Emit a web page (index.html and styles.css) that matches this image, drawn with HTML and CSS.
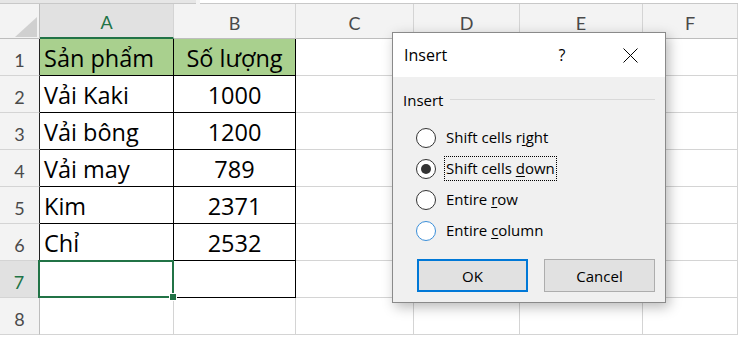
FILE: index.html
```html
<!DOCTYPE html>
<html>
<head>
<meta charset="utf-8">
<link rel="stylesheet" href="styles.css">
</head>
<body>
<div class="app">
  <div class="topstrip"><div class="tb tb1"></div><div class="tb tb2"></div></div>
  <div class="sheet">
    <div class="h corner"><svg width="22" height="20" viewBox="0 0 22 20"><polygon points="22,0 22,20 0,20" fill="#d0d0d0"/></svg></div>
    <div class="h col selcol">A</div>
    <div class="h col">B</div>
    <div class="h col">C</div>
    <div class="h col">D</div>
    <div class="h col">E</div>
    <div class="h col">F</div>

    <div class="h row tr">1</div>
    <div class="c t hd">Sản phẩm</div>
    <div class="c t hd ctr">Số lượng</div>
    <div class="c"></div><div class="c"></div><div class="c"></div><div class="c"></div>

    <div class="h row tr">2</div>
    <div class="c t">Vải Kaki</div>
    <div class="c t ctr">1000</div>
    <div class="c"></div><div class="c"></div><div class="c"></div><div class="c"></div>

    <div class="h row tr">3</div>
    <div class="c t">Vải bông</div>
    <div class="c t ctr">1200</div>
    <div class="c"></div><div class="c"></div><div class="c"></div><div class="c"></div>

    <div class="h row tr">4</div>
    <div class="c t">Vải may</div>
    <div class="c t ctr">789</div>
    <div class="c"></div><div class="c"></div><div class="c"></div><div class="c"></div>

    <div class="h row tr">5</div>
    <div class="c t">Kim</div>
    <div class="c t ctr">2371</div>
    <div class="c"></div><div class="c"></div><div class="c"></div><div class="c"></div>

    <div class="h row tr">6</div>
    <div class="c t">Chỉ</div>
    <div class="c t ctr">2532</div>
    <div class="c"></div><div class="c"></div><div class="c"></div><div class="c"></div>

    <div class="h row selrow">7</div>
    <div class="c t sel"><span class="handle"></span></div>
    <div class="c t"></div>
    <div class="c"></div><div class="c"></div><div class="c"></div><div class="c"></div>

    <div class="h row">8</div>
    <div class="c"></div><div class="c"></div><div class="c"></div><div class="c"></div><div class="c"></div><div class="c"></div>
  </div>

  <div class="dialog">
    <div class="dtitle">
      <span class="ttext">Insert</span>
      <span class="help">?</span>
      <svg class="close" width="15" height="15" viewBox="0 0 15 15"><path d="M0.5 0.5 L14.5 14.5 M14.5 0.5 L0.5 14.5" stroke="#000" stroke-width="1" fill="none"/></svg>
    </div>
    <div class="dbody">
      <div class="group"><span class="glabel">Insert</span><span class="gline"></span></div>
      <div class="radios">
        <div class="ropt"><span class="radio"></span><span class="rl">Shift cells r<u>i</u>ght</span></div>
        <div class="ropt"><span class="radio on"></span><span class="rl focus">Shift cells <u>d</u>own</span></div>
        <div class="ropt"><span class="radio"></span><span class="rl">Entire <u>r</u>ow</span></div>
        <div class="ropt"><span class="radio hov"></span><span class="rl">Entire <u>c</u>olumn</span></div>
      </div>
      <div class="buttons">
        <div class="btn def">OK</div>
        <div class="btn">Cancel</div>
      </div>
    </div>
  </div>
</div>
</body>
</html>
```
FILE: styles.css
```css
html, body { margin: 0; padding: 0; background: #fff; }
body { width: 738px; height: 338px; overflow: hidden; }
.app { position: relative; width: 738px; height: 338px; overflow: hidden; }

.topstrip { height: 4px; background: #f3f3f3; display: flex; }
.tb { height: 3px; border-bottom: 1px solid #c8c8c8; }
.tb1 { width: 196px; background: #e6e6e6; }
.tb2 { flex: 1; background: #fff; margin-left: 4px; }

.sheet {
  display: grid;
  grid-template-columns: 40px 134px 122px 118px 106px 123px 95px;
  grid-template-rows: 35px repeat(8, 37px);
}
.sheet > div { box-sizing: border-box; }

.h {
  background: #f3f3f3;
  color: #4a4a4a;
  font-family: Lato, "Open Sans", sans-serif;
  font-size: 18px;
  border-right: 1px solid #d4d4d4;
  border-bottom: 1px solid #d4d4d4;
  display: flex;
  justify-content: center;
}
.corner { align-items: flex-end; justify-content: flex-end; padding: 0 2px 1px 0; border-bottom-color: #bdbdbd; border-right-color: #bdbdbd; }
.corner svg { display: block; }
.col { align-items: flex-end; padding-bottom: 4px; border-bottom-color: #bdbdbd; }
.selcol { background: #e1e1e1; color: #217346; border-bottom: 2px solid #217346; }
.row { align-items: center; padding-top: 5px; border-right-color: #bdbdbd; }
.row.tr { border-right-color: #222; }
.selrow { background: #e1e1e1; color: #217346; border-right: 2px solid #217346; }

.c {
  border-right: 1px solid #d4d4d4;
  border-bottom: 1px solid #d4d4d4;
  font-family: "Open Sans", "Noto Sans", sans-serif;
  font-size: 23.5px;
  color: #000;
  display: flex;
  align-items: center;
  padding: 2px 0 0 4px;
  white-space: nowrap;
}
.c.t { border-right-color: #000; border-bottom-color: #000; }
.c.hd { background: #a9d08e; }
.c.ctr { justify-content: center; padding-left: 0; }
.sel { position: relative; }
.sel::after {
  content: "";
  position: absolute;
  left: -2px; top: -1px; right: -1px; bottom: -1px;
  border: 2px solid #217346;
}
.handle {
  position: absolute;
  right: -4px; bottom: -4px;
  width: 6px; height: 6px;
  background: #217346;
  border: 1px solid #fff;
  z-index: 2;
}

.dialog {
  position: absolute;
  left: 392px; top: 32px;
  width: 274px; height: 271px;
  box-sizing: border-box;
  border: 1px solid #8a8a8a;
  background: #f0f0f0;
  box-shadow: 3px 4px 12px rgba(0,0,0,0.28);
  font-family: "Open Sans", "Noto Sans", sans-serif;
  color: #000;
  display: flex;
  flex-direction: column;
}
.dtitle {
  height: 44px;
  background: #fff;
  display: flex;
  align-items: center;
  padding: 0 27px 0 11px;
  flex: none;
}
.ttext { flex: 1; font-size: 16px; }
.help { width: 20px; text-align: center; font-size: 16px; }
.close { margin-left: 51px; display: block; }

.dbody { padding: 14px 10px 11px 10px; flex: 1; display: flex; flex-direction: column; }
.group { height: 18px; display: flex; align-items: center; gap: 7px; }
.glabel { font-size: 15px; line-height: 18px; }
.gline { flex: 1; height: 1px; background: #d9d9d9; margin-top: -2px; }

.radios { margin-top: 13px; padding-left: 13px; }
.ropt { height: 31px; display: flex; align-items: center; }
.radio {
  width: 20px; height: 20px;
  box-sizing: border-box;
  border: 1px solid #333;
  border-radius: 50%;
  background: #fff;
  position: relative;
  flex: none;
}
.radio.on::after {
  content: "";
  position: absolute;
  left: 4px; top: 4px; width: 10px; height: 10px;
  border-radius: 50%;
  background: #333;
}
.radio.hov { border-color: #3b8fd9; }
.rl {
  margin-left: 8px;
  padding: 0 1px;
  height: 25px;
  line-height: 23px;
  box-sizing: border-box;
  border: 1px dotted transparent;
  display: block;
  font-size: 15px;
  white-space: nowrap;
}
.rl.focus { border-color: #000; }
.rl u { text-underline-offset: 2px; }

.buttons { margin-top: 13px; display: flex; gap: 16px; padding-left: 14px; }
.btn {
  width: 111px; height: 33px;
  box-sizing: border-box;
  background: #e1e1e1;
  border: 1px solid #adadad;
  display: flex;
  align-items: center;
  justify-content: center;
  font-size: 15px;
}
.btn.def { border: 2px solid #0078d7; }
```
